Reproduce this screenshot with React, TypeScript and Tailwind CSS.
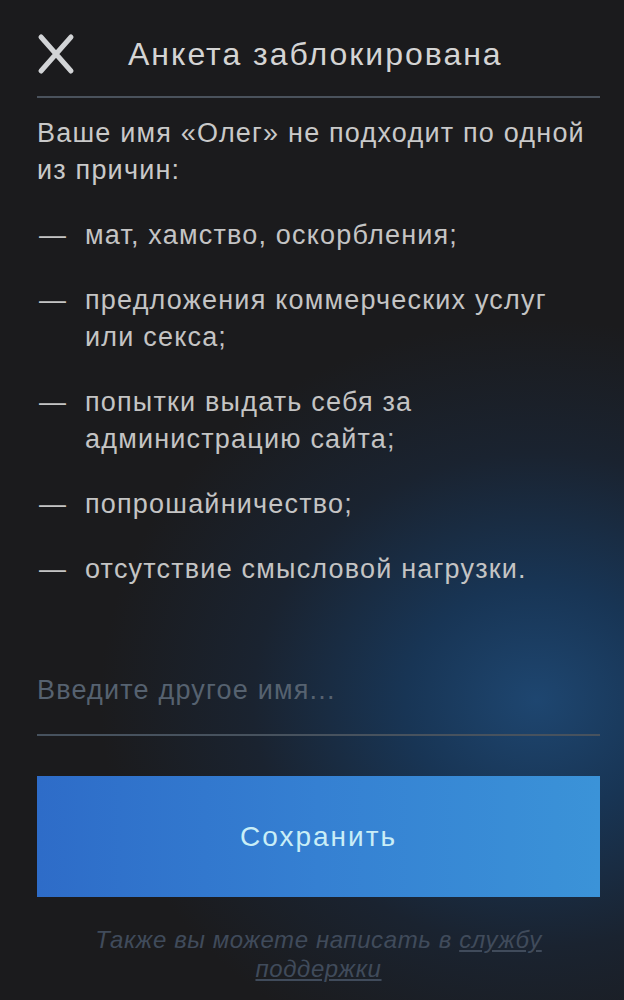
export default function App() {
  const reasons = [
    ['мат, хамство, оскорбления;'],
    ['предложения коммерческих услуг', 'или секса;'],
    ['попытки выдать себя за', 'администрацию сайта;'],
    ['попрошайничество;'],
    ['отсутствие смысловой нагрузки.'],
  ];

  return (
    <div className="w-[624px] h-[1000px] overflow-hidden bg-[#1b1b1d] bg-[radial-gradient(ellipse_70%_38%_at_86%_70%,#1e4670_0%,#183555_30%,#1a2330_65%,#1b1b1d_100%)] font-['Liberation_Sans',Arial,sans-serif]">
      <div className="pl-[37px] pr-[24px] pt-[31px]">
        {/* Header */}
        <div className="flex items-center h-[46px]">
          <svg width="38" height="42" viewBox="0 0 38 42" className="shrink-0">
            <path d="M4 4 L34 38 M34 4 L4 38" stroke="#d2d4d6" strokeWidth="5" strokeLinecap="round" />
          </svg>
          <h1 className="ml-[53px] text-[32px] leading-none text-[#d4d4d4] tracking-[2px]">
            Анкета заблокирована
          </h1>
        </div>

        <div className="mt-[19px] h-[2px] bg-[#4a525c]" />

        {/* Body */}
        <p className="mt-[17px] text-[27px] leading-[37px] text-[#c9c9c9] tracking-[1.2px]">
          Ваше имя «Олег» не подходит по одной
          <br />
          из причин:
        </p>

        <ul className="mt-[28px] flex flex-col gap-[28px]">
          {reasons.map((lines, i) => (
            <li key={i} className="flex text-[27px] leading-[37px] text-[#c4c4c4] tracking-[1.2px]">
              <span className="w-[48px] shrink-0 pl-[2px]">—</span>
              <span>
                {lines.map((l, j) => (
                  <span key={j} className="block">
                    {l}
                  </span>
                ))}
              </span>
            </li>
          ))}
        </ul>

        {/* Input */}
        <div className="mt-[84px]">
          <div className="text-[27px] leading-[37px] text-[#566270] tracking-[1.2px] pb-[25px] border-b-2 border-[#47525e]">
            Введите другое имя...
          </div>
        </div>

        {/* Button */}
        <button className="mt-[40px] w-full h-[121px] bg-gradient-to-r from-[#2e6cc8] via-[#3580d2] to-[#3b93d8] text-[#c9eef7] text-[28px] tracking-[2px]">
          Сохранить
        </button>

        {/* Footer */}
        <div className="mt-[28px] text-center italic text-[24px] leading-[29px] text-[#404b5b] tracking-[0.6px]">
          <p>
            Также вы можете написать в <span className="underline">службу</span>
          </p>
          <p className="underline">поддержки</p>
        </div>
      </div>
    </div>
  );
}
